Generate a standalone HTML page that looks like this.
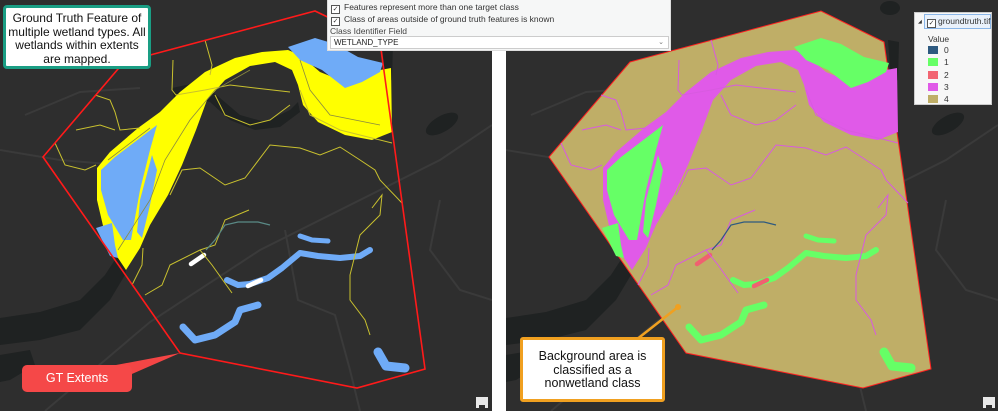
<!DOCTYPE html>
<html><head><meta charset="utf-8"><style>
html,body{margin:0;padding:0;background:#fff}
body{width:998px;height:411px;overflow:hidden;position:relative;font-family:"Liberation Sans",sans-serif}
svg{position:absolute;left:0;top:0}
.box{position:absolute;background:#fff;text-align:center;color:#111;font-size:12.5px;line-height:13.6px;box-sizing:border-box;white-space:nowrap}
.panel{position:absolute;left:327px;top:0;width:344px;height:51px;background:#f6f7f7;border:1px solid #ddd;border-top:none;font-size:8.5px;color:#333;box-sizing:border-box}
.cb{display:inline-block;width:7px;height:7px;border:1px solid #555;background:#fff;margin:0 4px 0 3px;vertical-align:-1px;font-size:7px;line-height:7px;text-align:center}
.lg div{height:12.25px}
.sw{display:inline-block;width:10px;height:8px;vertical-align:-1px;margin-right:6px}
</style></head><body>
<svg width="998" height="411" viewBox="0 0 998 411" xmlns="http://www.w3.org/2000/svg">
<defs>
<clipPath id="cl"><rect x="0" y="0" width="492" height="411"/></clipPath>
<clipPath id="cr"><rect x="506" y="0" width="492" height="411"/></clipPath>
<g id="base">
 <rect x="0" y="0" width="492" height="411" fill="#2e2e2e"/>
 <g fill="none" stroke="#3a3a3a" stroke-width="2">
  <path d="M45,411 L150,322 L260,250 L360,200 L440,160 L492,125"/>
  <path d="M0,150 L60,160 L120,165"/>
  <path d="M25,115 L80,92 L140,88"/>
  <path d="M285,230 L298,300 L335,315 L350,370 L360,411"/>
  <path d="M440,200 L430,250 L460,290 L492,300"/>
 </g>
 <g fill="#1f2222">
  <path d="M0,318 L40,312 L80,300 L105,275 L118,255 L130,252 L125,275 L110,300 L80,330 L40,340 L0,345 Z"/>
  <path d="M0,355 L30,350 L35,365 L10,380 L0,382 Z"/>
  <path d="M172,88 L200,82 L220,98 L240,115 L265,122 L290,110 L298,102 L300,112 L280,127 L255,130 L230,120 L210,102 L185,97 L175,102 Z"/>
  <path d="M382,40 L393,42 L392,80 L385,82 Z"/>
  <ellipse cx="442" cy="124" rx="18" ry="8" transform="rotate(-30 442 124)"/>
  <ellipse cx="384" cy="8" rx="10" ry="7"/>
 </g>
</g>
<g id="shapes">
 <path style="fill:var(--a)" d="M126,270 L114,252 L104,230 L97,200 L97,168 L110,152 L138,128 L160,112 L180,92 L205,72 L235,58 L262,52 L288,50 L300,55 L320,72 L350,84 L380,70 L391,68 L392,132 L372,140 L345,135 L318,122 L303,105 L298,85 L292,70 L275,62 L250,66 L225,80 L207,100 L196,130 L182,165 L168,195 L150,225 L140,248 Z"/>
 <path style="fill:var(--b)" d="M101,170 L115,157 L157,125 L150,150 L140,190 L131,240 L123,240 L108,215 L101,190 Z"/>
 <path style="fill:var(--b)" d="M152,155 L157,170 L150,205 L142,238 L137,232 L140,200 Z"/>
 <path style="fill:var(--b)" d="M288,47 L315,38 L335,44 L358,57 L383,63 L380,72 L362,82 L345,88 L322,70 L300,60 Z"/>
 <path style="fill:var(--b)" d="M96,228 L112,223 L115,245 L118,258 L110,256 Z"/>
 <g fill="none" style="stroke:var(--b)" stroke-linecap="round" stroke-linejoin="round">
  <path stroke-width="5" d="M300,236 L312,240 L328,241"/>
  <path stroke-width="6" d="M227,280 L238,285 L250,284 L268,278 L282,268 L300,253 L318,256 L340,258 L360,256 L370,250"/>
  <path stroke-width="7" d="M183,327 L195,340 L215,335 L235,322 L240,310 L258,305"/>
  <path stroke-width="9" d="M378,352 L386,366 L405,368"/>
 </g>
 <g fill="none" style="stroke:var(--c)" stroke-width="4.5" stroke-linecap="round">
  <path d="M191,264 L204,255"/>
  <path d="M248,286 L261,280"/>
 </g>
 <g fill="none" style="stroke:var(--d)" stroke-width="1">
  <path d="M173,60 L172,90 L176,95 L205,90 L230,85 L255,88 L290,92"/>
  <path d="M205,40 L212,65 L210,75"/>
  <path d="M95,95 L110,100 L115,112 L120,130 L140,128"/>
  <path d="M76,130 L100,125 L115,130"/>
  <path d="M55,143 L65,165 L85,170 L96,165"/>
  <path d="M215,95 L225,115 L250,125 L270,120 L290,105"/>
  <path d="M300,90 L310,115 L340,130 L392,143"/>
  <path d="M170,195 L182,170 L200,168 L225,185 L245,178 L270,145 L300,148 L320,155 L340,147 L360,160 L375,170 L380,180 L402,203"/>
  <path d="M372,208 L382,195 L380,215 L360,235 L350,275 L350,300 L365,320 L370,335"/>
  <path d="M249,210 L225,220 L215,245 L200,250 L170,265 L162,285 L145,295"/>
  <path d="M200,250 L212,265 L232,293"/>
  <path d="M143,248 L142,265 L132,285"/>
 </g>
 <path fill="none" style="stroke:var(--e)" stroke-width="1.2" d="M206,250 L215,240 L225,225 L238,222 L258,222 L270,225"/>
</g>
</defs>

<g clip-path="url(#cl)">
 <use href="#base"/>
 <g style="--a:#ffff00;--b:#6fabf7;--c:#ffffff;--d:#c9c12e;--e:#5a8a86">
  <use href="#shapes"/>
  <path fill="none" stroke="#8a8a40" stroke-width="0.8" d="M108,160 L150,128 M118,250 L150,200 L165,160 L190,120 L215,90 L250,70 M300,60 L310,90 L330,115 L380,125"/>
 </g>
 <path fill="none" stroke="#ff1a1a" stroke-width="1.6" d="M43,157 L124,62 L315,11 L380,42 L425,369 L357,388 L180,353 Z"/>
</g>

<rect x="492" y="0" width="14" height="411" fill="#fff"/>

<g clip-path="url(#cr)">
 <g transform="translate(506,0)">
  <use href="#base"/>
  <path fill="#bfae67" stroke="#ff2020" stroke-width="1" d="M43,157 L124,62 L315,11 L378,42 L425,369 L357,388 L180,353 Z"/>
  <g style="--a:#e05ae8;--b:#66ff66;--c:#f06070;--d:#d85ae0;--e:#2e5a80">
   <use href="#shapes"/>
  </g>
 </g>
</g>

<path d="M100,368 L180,353 L118,380 Z" fill="#f44545"/>
<path d="M636,340 L678,307" stroke="#f0a020" stroke-width="2.5"/>
<circle cx="678" cy="307" r="3" fill="#f0a020"/>

<g fill="#e8e8e8">
 <rect x="476" y="397" width="12" height="8"/><rect x="476" y="405" width="3" height="3"/><rect x="485" y="405" width="3" height="3"/>
 <rect x="983" y="397" width="12" height="8"/><rect x="983" y="405" width="3" height="3"/><rect x="992" y="405" width="3" height="3"/>
</g>
</svg>

<div class="box" style="left:3px;top:5px;width:148px;height:64px;border:3px solid #1a9e84;border-radius:4px;padding-top:4px;font-size:12px">Ground Truth Feature of<br>multiple wetland types. All<br>wetlands within extents<br>are mapped.</div>
<div class="box" style="left:22px;top:365px;width:110px;height:27px;background:#f54848;color:#fff;border-radius:5px;line-height:27px;font-size:12.5px">GT Extents</div>
<div class="box" style="left:520px;top:337px;width:145px;height:65px;border:3px solid #f0a020;border-radius:3px;padding-top:10px">Background area is<br>classified as a<br>nonwetland class</div>

<div class="panel">
 <div style="position:absolute;top:2px;left:0"><span class="cb">✓</span>Features represent more than one target class</div>
 <div style="position:absolute;top:14px;left:0"><span class="cb">✓</span>Class of areas outside of ground truth features is known</div>
 <div style="position:absolute;top:26px;left:2px;color:#444">Class Identifier Field</div>
 <div style="position:absolute;top:36px;left:2px;width:339px;height:13px;background:#fff;border:1px solid #ccc;box-sizing:border-box;padding-left:3px;line-height:12px;font-size:8px;color:#222">WETLAND_TYPE<span style="position:absolute;right:4px;color:#777;font-size:7px">⌄</span></div>
</div>

<div style="position:absolute;left:914px;top:12px;width:78px;height:93px;background:#f7f7f7;border:1px solid #ccc;box-sizing:border-box;font-size:8.5px;color:#333">
 <div style="position:absolute;left:3px;top:6px;font-size:5px">◢</div>
 <div style="position:absolute;left:9px;top:1px;width:67px;height:15px;border:1px solid #8ab6e8;background:#e9f1fb;box-sizing:border-box;line-height:13px;white-space:nowrap"><span class="cb" style="margin:0 2px 0 2px">✓</span>groundtruth.tif</div>
 <div style="position:absolute;left:13px;top:21px">Value</div>
 <div class="lg" style="position:absolute;left:13px;top:31px;line-height:12px">
  <div><span class="sw" style="background:#2e5a80"></span>0</div>
  <div><span class="sw" style="background:#66ff66"></span>1</div>
  <div><span class="sw" style="background:#f26572"></span>2</div>
  <div><span class="sw" style="background:#e05ae8"></span>3</div>
  <div><span class="sw" style="background:#bfae67"></span>4</div>
 </div>
</div>
</body></html>
